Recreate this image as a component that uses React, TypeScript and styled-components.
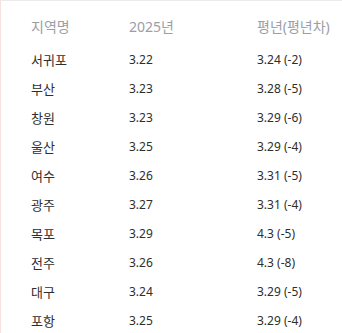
import React from "react";
import styled, { createGlobalStyle } from "styled-components";

const GlobalStyle = createGlobalStyle`
  body {
    margin: 0;
    background: #fff;
    font-family: "Noto Sans", "Noto Sans CJK KR", sans-serif;
  }
`;

const Frame = styled.div`
  width: 342px;
  height: 333px;
  box-sizing: border-box;
  border-top: 1px solid #ececec;
  border-left: 1px solid #f6e0e0;
  overflow: hidden;
`;

const Table = styled.table`
  border-collapse: collapse;
  margin-left: 30px;
  margin-top: 10px;
`;

const HeadCell = styled.th<{ $w: number }>`
  width: ${(p) => p.$w}px;
  text-align: left;
  font-weight: 400;
  font-size: 14px;
  color: #9a9ea6;
  height: 30px;
  padding: 0;
  vertical-align: middle;
`;

const Cell = styled.td<{ $kr?: boolean }>`
  padding: 0;
  height: 29px;
  font-size: ${(p) => (p.$kr ? 13 : 12)}px;
  color: #2e2e2e;
  vertical-align: middle;
`;

const FirstRow = styled.tr`
  td {
    padding-top: 4px;
  }
`;

const rows: [string, string, string][] = [
  ["서귀포", "3.22", "3.24 (-2)"],
  ["부산", "3.23", "3.28 (-5)"],
  ["창원", "3.23", "3.29 (-6)"],
  ["울산", "3.25", "3.29 (-4)"],
  ["여수", "3.26", "3.31 (-5)"],
  ["광주", "3.27", "3.31 (-4)"],
  ["목포", "3.29", "4.3 (-5)"],
  ["전주", "3.26", "4.3 (-8)"],
  ["대구", "3.24", "3.29 (-5)"],
  ["포항", "3.25", "3.29 (-4)"],
];

export default function App() {
  return (
    <Frame>
      <GlobalStyle />
      <Table>
        <thead>
          <tr>
            <HeadCell $w={98}>지역명</HeadCell>
            <HeadCell $w={128}>2025년</HeadCell>
            <HeadCell $w={84}>평년(평년차)</HeadCell>
          </tr>
        </thead>
        <tbody>
          {rows.map(([name, cur, avg], i) => {
            const Row = i === 0 ? FirstRow : "tr";
            return (
              <Row key={name}>
                <Cell $kr>{name}</Cell>
                <Cell>{cur}</Cell>
                <Cell>{avg}</Cell>
              </Row>
            );
          })}
        </tbody>
      </Table>
    </Frame>
  );
}
